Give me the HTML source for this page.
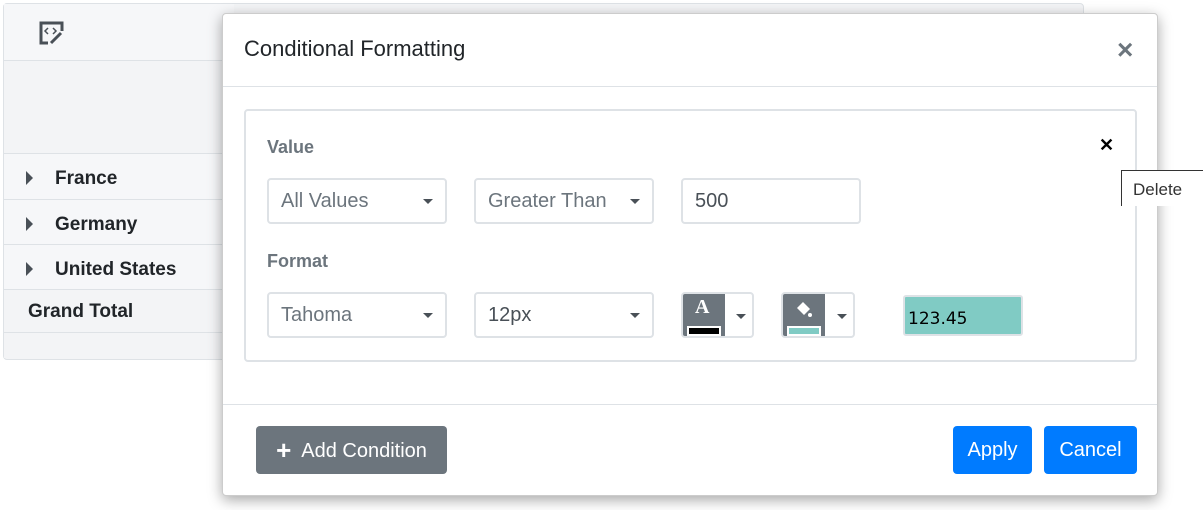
<!DOCTYPE html>
<html><head><style>
*{box-sizing:border-box;margin:0;padding:0}
body{width:1203px;height:510px;background:#fff;position:relative;overflow:hidden;font-family:"Liberation Sans",Arial,sans-serif}
.abs{position:absolute}
.tbl{left:3px;top:3px;width:1081px;height:357px;border:1px solid #dee2e6;border-radius:4px;background:#f3f4f6}
.row{position:absolute;left:4px;width:230px;border-top:1px solid #dee2e6;font-weight:bold;font-size:19px;color:#212529;background:#f6f7f9}
.tri{position:absolute;left:22px;width:0;height:0;border-left:7px solid #495057;border-top:7px solid transparent;border-bottom:7px solid transparent}
.dlg{left:222px;top:13px;width:936px;height:483px;background:#fff;border:1px solid #ccc;border-radius:4px;box-shadow:0 4px 14px rgba(0,0,0,.35)}
.sel{position:absolute;height:46px;border:2px solid #dee2e6;border-radius:4px;font-size:20px;color:#6c757d;padding:10px 12px;background:#fff}
.sel .c{position:absolute;right:12px;top:19px;border-left:5px solid transparent;border-right:5px solid transparent;border-top:5px solid #495057}
.lbl{position:absolute;font-weight:bold;font-size:18px;color:#6c757d}
.btn{position:absolute;border-radius:4px;color:#fff;font-size:20px;text-align:center;line-height:48px;height:48px}
</style></head><body>
<div class="abs tbl"></div>
<div class="abs" style="left:4px;top:4px;width:230px;height:57px;background:#f6f7f9;border-bottom:1px solid #dee2e6"></div>
<svg class="abs" style="left:39px;top:21px" width="25" height="25" viewBox="0 0 25 25"><path d="M9 22H2V2h21v8" fill="none" stroke="#495057" stroke-width="3"/><path d="M9 7l-3 3 3 3M14 7l3 3-3 3" fill="none" stroke="#495057" stroke-width="1.5"/><path d="M12 22l10-10" stroke="#495057" stroke-width="3"/></svg>
<div class="row" style="top:153px;height:47px"><div class="tri" style="top:17px"></div><span class="abs" style="left:51px;top:14px">France</span></div>
<div class="row" style="top:199px;height:46px"><div class="tri" style="top:17px"></div><span class="abs" style="left:51px;top:14px">Germany</span></div>
<div class="row" style="top:244px;height:46px"><div class="tri" style="top:17px"></div><span class="abs" style="left:51px;top:14px">United States</span></div>
<div class="row" style="top:289px;height:44px;background:#f3f4f6"><span class="abs" style="left:24px;top:11px">Grand Total</span></div>
<div class="row" style="top:332px;height:26px;background:#f3f4f6"></div>

<div class="abs dlg">
 <div class="abs" style="left:21px;top:22px;font-size:22px;color:#212529">Conditional Formatting</div>
 <div class="abs" style="left:894px;top:20px;font-size:28px;color:#6c757d;font-weight:bold">×</div>
 <div class="abs" style="left:0;top:72px;width:934px;border-top:1px solid #dee2e6"></div>
 <div class="abs" style="left:21px;top:95px;width:893px;height:253px;border:2px solid #dee2e6;border-radius:4px">
  <div class="lbl" style="left:21px;top:26px">Value</div>
  <div class="sel" style="left:21px;top:67px;width:180px">All Values<div class="c"></div></div>
  <div class="sel" style="left:228px;top:67px;width:180px">Greater Than<div class="c"></div></div>
  <div class="sel" style="left:435px;top:67px;width:180px;color:#495057">500</div>
  <div class="lbl" style="left:21px;top:140px">Format</div>
  <div class="sel" style="left:21px;top:181px;width:180px">Tahoma<div class="c"></div></div>
  <div class="sel" style="left:228px;top:181px;width:180px;color:#495057">12px<div class="c"></div></div>
  <div class="abs" style="left:435px;top:181px;width:73px;height:46px;border:2px solid #dee2e6;border-radius:4px;overflow:hidden">
   <div class="abs" style="left:0;top:0;width:42px;height:44px;background:#6c757d"><div class="abs" style="left:12px;top:2px;color:#fff;font:bold 20px 'Liberation Serif',serif">A</div><div class="abs" style="left:4px;top:32px;width:34px;height:10px;background:#000;border:2px solid #fff"></div></div>
   <div class="abs" style="left:53px;top:20px;border-left:5px solid transparent;border-right:5px solid transparent;border-top:5px solid #495057"></div>
  </div>
  <div class="abs" style="left:535px;top:181px;width:74px;height:46px;border:2px solid #dee2e6;border-radius:4px;overflow:hidden">
   <div class="abs" style="left:0;top:0;width:42px;height:44px;background:#6c757d"><svg class="abs" style="left:11px;top:6px" width="20" height="20" viewBox="0 0 20 20"><path d="M3 8l6-6 7 7-6 6z" fill="#fff"/><circle cx="16" cy="15" r="2" fill="#fff"/></svg><div class="abs" style="left:4px;top:32px;width:34px;height:10px;background:#80cbc4;border:2px solid #fff"></div></div>
   <div class="abs" style="left:54px;top:20px;border-left:5px solid transparent;border-right:5px solid transparent;border-top:5px solid #495057"></div>
  </div>
  <div class="abs" style="left:657px;top:184px;width:120px;height:41px;background:#80cbc4;border:2px solid #dee2e6;border-radius:3px;font:17px Tahoma,'DejaVu Sans',sans-serif;color:#000;padding:12px 0 0 3px">123.45</div>
  <div class="abs" style="left:853px;top:24px;font-size:18px;font-weight:bold;color:#000;line-height:20px">✕</div>
 </div>
 <div class="abs" style="left:0;top:390px;width:934px;border-top:1px solid #dee2e6"></div>
 <div class="btn" style="left:33px;top:412px;width:191px;background:#6c757d"><b style="font-size:26px;vertical-align:-2px">+</b>&nbsp; Add Condition</div>
 <div class="btn" style="left:730px;top:412px;width:79px;background:#007bff">Apply</div>
 <div class="btn" style="left:821px;top:412px;width:93px;background:#007bff">Cancel</div>
</div>
<div class="abs" style="left:1121px;top:170px;width:82px;height:36px;background:#fff;border-left:1px solid #333;border-top:1px solid #333;font-size:17px;color:#333;padding:9px 0 0 11px">Delete</div>
</body></html>
